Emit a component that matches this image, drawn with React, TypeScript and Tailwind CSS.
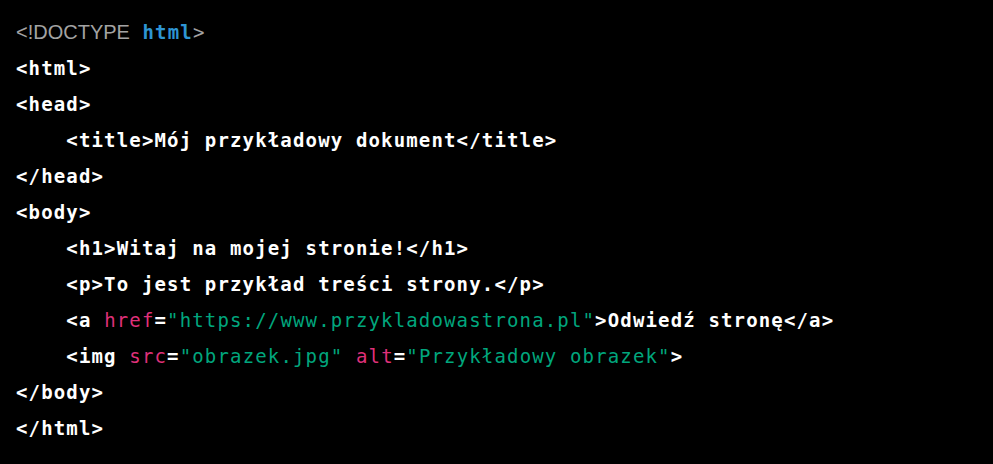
import React from "react";

const W = "text-white font-bold";
const R = "text-[#df3079] font-normal";
const G = "text-[#00a67d] font-normal";

type Seg = [string, string];

const lines: Seg[][] = [
  [[W, "<html>"]],
  [[W, "<head>"]],
  [[W, "    <title>Mój przykładowy dokument</title>"]],
  [[W, "</head>"]],
  [[W, "<body>"]],
  [[W, "    <h1>Witaj na mojej stronie!</h1>"]],
  [[W, "    <p>To jest przykład treści strony.</p>"]],
  [
    [W, "    <a "],
    [R, "href"],
    [W, "="],
    [G, '"https://www.przykladowastrona.pl"'],
    [W, ">Odwiedź stronę</a>"],
  ],
  [
    [W, "    <img "],
    [R, "src"],
    [W, "="],
    [G, '"obrazek.jpg"'],
    [W, " "],
    [R, "alt"],
    [W, "="],
    [G, '"Przykładowy obrazek"'],
    [W, ">"],
  ],
  [[W, "</body>"]],
  [[W, "</html>"]],
];

export default function App() {
  return (
    <div className="w-[993px] h-[464px] bg-black overflow-hidden pt-[14px] pl-[16px]">
      <pre
        className="m-0 text-[19px] leading-[36px] tracking-[1.15px] whitespace-pre"
        style={{ fontFamily: '"DejaVu Sans Mono", monospace' }}
      >
        <div className="h-[36px]">
          <span
            className="text-[#a3a3a3] text-[20px] tracking-normal font-normal"
            style={{ fontFamily: '"Liberation Sans", Arial, sans-serif' }}
          >
            {"<!DOCTYPE"}
          </span>
          <span className="text-[#2e95d3] font-bold">{" html"}</span>
          <span className="text-[#a3a3a3]">{">"}</span>
        </div>
        {lines.map((segs, i) => (
          <div key={i} className="h-[36px]">
            {segs.map(([c, t], j) => (
              <span key={j} className={c}>
                {t}
              </span>
            ))}
          </div>
        ))}
      </pre>
    </div>
  );
}
